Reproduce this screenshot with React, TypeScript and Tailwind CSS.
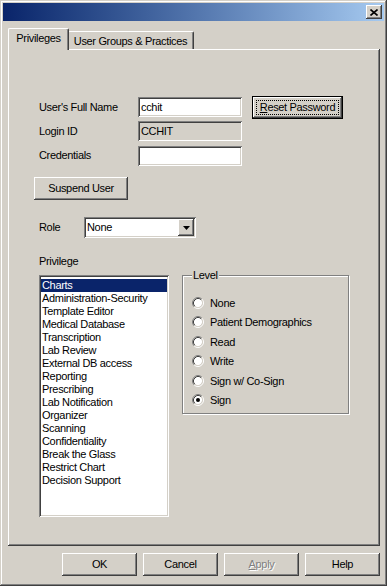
import React from 'react';

const raised =
  'shadow-[inset_-1px_-1px_#404040,inset_1px_1px_#ffffff,inset_-2px_-2px_#808080,inset_2px_2px_#d4d0c8]';
const sunken =
  'shadow-[inset_1px_1px_#808080,inset_-1px_-1px_#ffffff,inset_2px_2px_#404040,inset_-2px_-2px_#d4d0c8]';

const PRIVILEGES = [
  'Charts',
  'Administration-Security',
  'Template Editor',
  'Medical Database',
  'Transcription',
  'Lab Review',
  'External DB access',
  'Reporting',
  'Prescribing',
  'Lab Notification',
  'Organizer',
  'Scanning',
  'Confidentiality',
  'Break the Glass',
  'Restrict Chart',
  'Decision Support'
];

const LEVELS = ['None', 'Patient Demographics', 'Read', 'Write', 'Sign w/ Co-Sign', 'Sign'];

const Radio = ({ checked }: { checked?: boolean }) => (
  <svg width="12" height="12" viewBox="0 0 12 12" className="shrink-0">
    <circle cx="6" cy="6" r="4.2" fill="#ffffff" />
    <path d="M2.11 9.89 A5.5 5.5 0 0 1 9.89 2.11" fill="none" stroke="#808080" />
    <path d="M9.89 2.11 A5.5 5.5 0 0 1 2.11 9.89" fill="none" stroke="#ffffff" />
    <path d="M2.82 9.18 A4.5 4.5 0 0 1 9.18 2.82" fill="none" stroke="#404040" />
    <path d="M9.18 2.82 A4.5 4.5 0 0 1 2.82 9.18" fill="none" stroke="#d4d0c8" />
    {checked && <circle cx="6" cy="6" r="2" fill="#000000" />}
  </svg>
);

const Button = ({ children, className = '' }: { children: React.ReactNode; className?: string }) => (
  <div className={`flex items-center justify-center bg-[#d4d0c8] ${raised} ${className}`}>
    {children}
  </div>
);

const Field = ({ value, disabled }: { value?: string; disabled?: boolean }) => (
  <div
    className={`flex h-[20px] w-[104px] items-center pl-[3px] ${sunken} ${
      disabled ? 'bg-[#d4d0c8]' : 'bg-white'
    }`}
  >
    {value}
  </div>
);

const App = () => {
  return (
    <div
      className={`flex h-[586px] w-[387px] flex-col bg-[#d4d0c8] p-[3px] text-[11px] tracking-[-0.03em] text-black shadow-[inset_-1px_-1px_#404040,inset_1px_1px_#d4d0c8,inset_-2px_-2px_#808080,inset_2px_2px_#ffffff]`}
      style={{ fontFamily: '"Liberation Sans", Arial, sans-serif' }}
    >
      {/* title bar */}
      <div className="flex h-[18px] items-center justify-end bg-gradient-to-r from-[#0a246a] to-[#a6caf0] pr-[2px]">
        <div className={`flex h-[14px] w-[16px] items-center justify-center bg-[#d4d0c8] ${raised}`}>
          <svg width="8" height="7" viewBox="0 0 8 7">
            <path d="M0.5 0.5 L7.5 6.5 M7.5 0.5 L0.5 6.5" stroke="#000" strokeWidth="1.6" />
          </svg>
        </div>
      </div>

      <div className="flex flex-1 flex-col pl-[5px] pr-[4px] pt-[7px]">
        {/* tabs */}
        <div className="flex h-[21px] items-end">
          <div className="relative z-10 -mb-px flex h-[22px] w-[61px] items-center justify-center rounded-t-[2px] border-l border-t border-r border-l-white border-t-white border-r-[#404040] bg-[#d4d0c8] pb-[2px] shadow-[inset_-1px_0_#808080]">
            Privileges
          </div>
          <div className="-ml-px flex h-[18px] w-[126px] items-center justify-center rounded-t-[2px] border-t border-r border-t-white border-r-[#404040] pt-[1px] shadow-[inset_-1px_0_#808080]">
            User Groups &amp; Practices
          </div>
        </div>

        {/* panel */}
        <div
          className={`flex h-[497px] flex-col pl-[31px] pt-[48px] shadow-[inset_-1px_-1px_#404040,inset_1px_1px_#ffffff,inset_-2px_-2px_#808080]`}
        >
          <div className="flex h-[20px] items-center">
            <div className="w-[99px]">User's Full Name</div>
            <Field value="cchit" />
            <div className="ml-[10px] flex h-[23px] w-[91px] border border-black">
              <Button className="flex-1">
                <span className="border border-dotted border-black px-[3px] leading-[13px]">
                  <span className="underline">R</span>eset Password
                </span>
              </Button>
            </div>
          </div>
          <div className="mt-[4px] flex h-[20px] items-center">
            <div className="w-[99px]">Login ID</div>
            <Field value="CCHIT" disabled />
          </div>
          <div className="mt-[4px] flex h-[21px] items-center">
            <div className="w-[99px]">Credentials</div>
            <Field />
          </div>

          <Button className="-ml-[5px] mt-[11px] h-[23px] w-[94px]">Suspend User</Button>

          <div className="mt-[17px] flex h-[21px] items-center">
            <div className="w-[45px]">Role</div>
            <div className={`flex h-[21px] w-[112px] items-center bg-white p-[2px] ${sunken}`}>
              <span className="flex-1 pl-[1px]">None</span>
              <Button className="h-[17px] w-[16px]">
                <svg width="7" height="4" viewBox="0 0 7 4">
                  <path d="M0 0h7L3.5 4z" fill="#000" />
                </svg>
              </Button>
            </div>
          </div>

          <div className="mt-[17px] leading-[13px]">Privilege</div>

          <div className="mt-[7px] flex items-start">
            <div className={`flex h-[242px] w-[130px] flex-col bg-white px-[2px] pt-[4px] ${sunken}`}>
              {PRIVILEGES.map((item, index) => (
                <div
                  key={item}
                  className={`h-[13px] pl-[1px] leading-[13px] ${
                    index === 0 ? 'bg-[#0a246a] text-white' : ''
                  }`}
                >
                  {item}
                </div>
              ))}
            </div>

            <div className="relative ml-[13px] h-[139px] w-[167px] border border-[#808080] shadow-[1px_1px_#ffffff,inset_1px_1px_#ffffff]">
              <span className="absolute -top-[7px] left-[9px] bg-[#d4d0c8] px-[1px] leading-[13px]">
                Level
              </span>
              <div className="flex flex-col pl-[9px] pt-[17px]">
                {LEVELS.map((level, index) => (
                  <div key={level} className="flex h-[19.5px] items-center gap-[6px]">
                    <Radio checked={index === LEVELS.length - 1} />
                    <span>{level}</span>
                  </div>
                ))}
              </div>
            </div>
          </div>
        </div>

        {/* footer buttons */}
        <div className="mt-[7px] flex justify-end gap-[6px]">
          <Button className="h-[23px] w-[75px]">OK</Button>
          <Button className="h-[23px] w-[75px]">Cancel</Button>
          <Button className="h-[23px] w-[75px] text-[#808080] [text-shadow:1px_1px_0_#ffffff]">
            <span className="underline">A</span>pply
          </Button>
          <Button className="h-[23px] w-[75px]">Help</Button>
        </div>
      </div>
    </div>
  );
};

export default App;
